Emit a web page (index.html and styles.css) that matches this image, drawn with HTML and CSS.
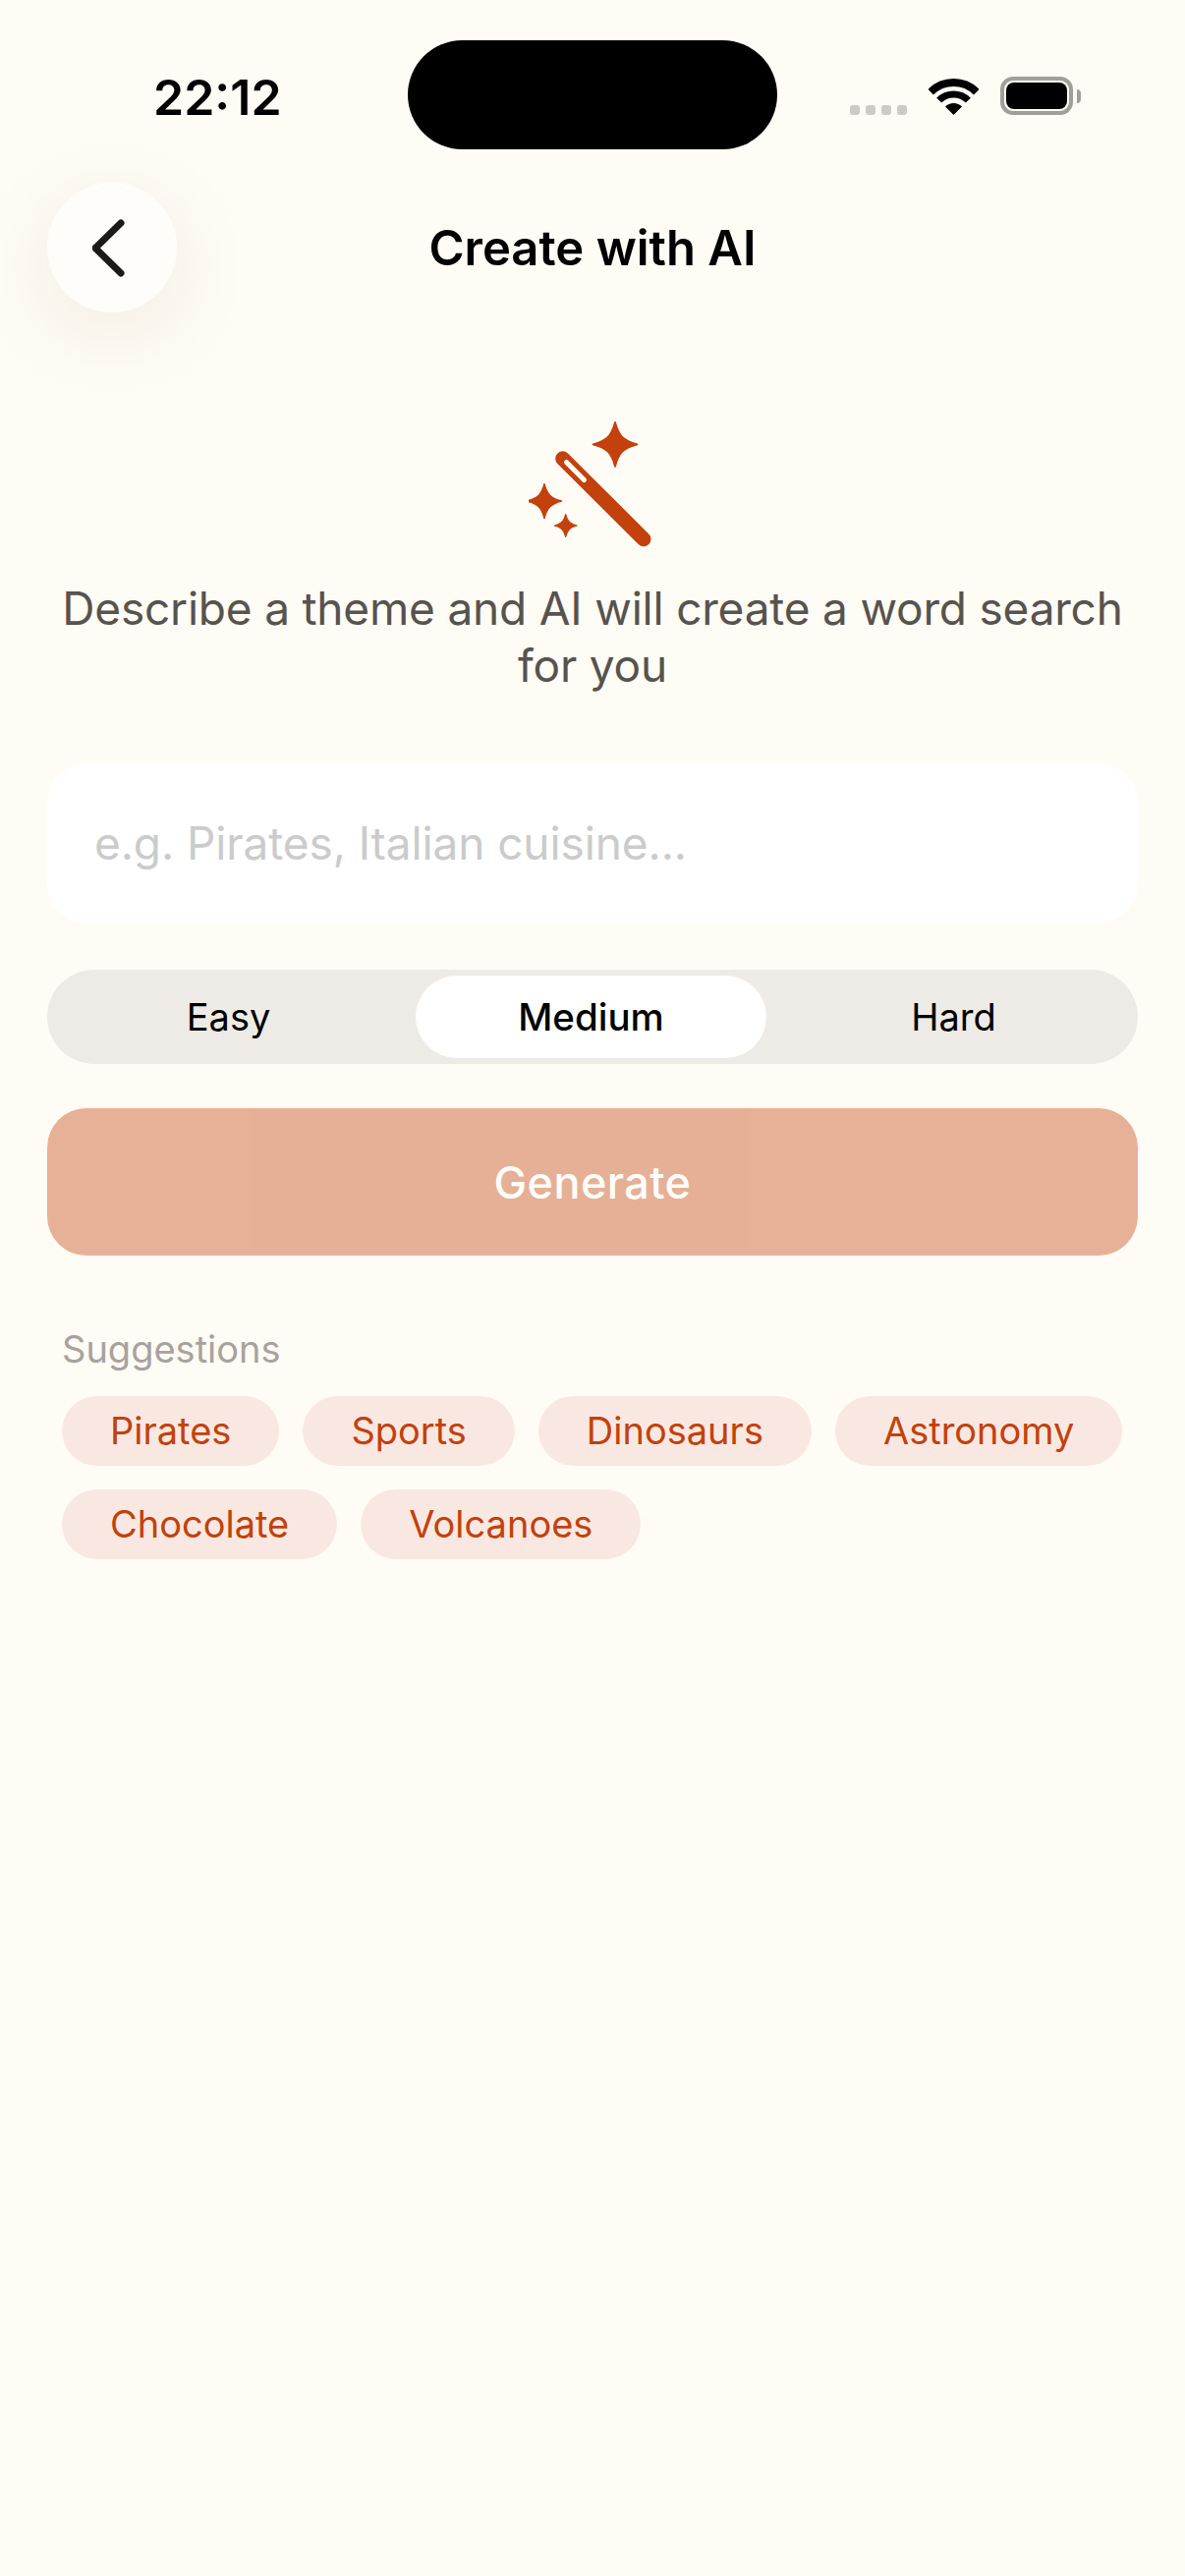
FILE: index.html
```html
<!DOCTYPE html>
<html lang="en">
<head>
  <meta charset="UTF-8" />
  <meta name="viewport" content="width=device-width, initial-scale=1.0" />
  <title>Create with AI</title>
  <link rel="stylesheet" href="styles.css">
</head>
<body>
  <!-- Status bar -->
  <div class="status-bar">
    <div class="time">22:12</div>
    <div class="island"></div>
    <div class="status-icons">
      <div class="signal"><span></span><span></span><span></span><span></span></div>
      <svg class="wifi" width="51" height="37" viewBox="0 0 51 37">
        <path d="M2.2 13.7A33 33 0 0 1 48.8 13.7" fill="none" stroke="#000" stroke-width="8" />
        <path d="M10.65 22.15A21 21 0 0 1 40.35 22.15" fill="none" stroke="#000" stroke-width="7" />
        <path d="M25.5 37L17 28.5A12 12 0 0 1 34 28.5Z" fill="#000" />
      </svg>
      <div class="battery"><div class="battery-level"></div></div>
      <div class="battery-tip"></div>
    </div>
  </div>

  <!-- Header -->
  <div class="header">
    <button class="back-button">
      <svg width="40" height="64" viewBox="0 0 40 64">
        <path d="M29 7L3 32.5L29 58" fill="none" stroke="#1c1917" stroke-width="7" stroke-linecap="round" stroke-linejoin="round" />
      </svg>
    </button>
    <h1>Create with AI</h1>
  </div>

  <div class="content">
    <svg class="wand" width="130" height="140" viewBox="0 0 130 140">
      <defs>
        <path id="star" d="M0 -10C1.6 -3.8 3.8 -1.6 10 0C3.8 1.6 1.6 3.8 0 10C-1.6 3.8 -3.8 1.6 -10 0C-3.8 -1.6 -1.6 -3.8 0 -10Z" />
      </defs>
      <g fill="#c2410c" stroke="#c2410c" stroke-linejoin="round">
        <use href="#star" transform="translate(88 32.3) scale(2.25)" stroke-width="0.8" />
        <use href="#star" transform="translate(16 90) scale(1.75)" stroke-width="0.8" />
        <use href="#star" transform="translate(37.7 115) scale(1.15)" stroke-width="0.9" />
      </g>
      <path d="M34.7 46.7L117 128.7" stroke="#c2410c" stroke-width="15" stroke-linecap="round" />
      <path d="M38.5 50.5L56.5 68.5" stroke="#fffcf5" stroke-width="5" stroke-linecap="round" />
    </svg>

    <p class="intro">Describe a theme and AI will create a word search for you</p>

    <input class="theme-input" type="text" placeholder="e.g. Pirates, Italian cuisine..." />

    <div class="difficulty">
      <div class="level">Easy</div>
      <div class="level selected">Medium</div>
      <div class="level">Hard</div>
    </div>

    <button class="generate" disabled>Generate</button>

    <div class="suggestions">
      <div class="suggestions-label">Suggestions</div>
      <div class="chips">
        <div class="chip">Pirates</div>
        <div class="chip">Sports</div>
        <div class="chip">Dinosaurs</div>
        <div class="chip">Astronomy</div>
        <div class="chip">Chocolate</div>
        <div class="chip">Volcanoes</div>
      </div>
    </div>
  </div>
</body>
</html>
```

FILE: styles.css
```css
* {
  box-sizing: border-box;
}

body {
  margin: 0;
  min-height: 2622px;
  background-color: #fffcf5;
  color: #000;
  font-family: Inter, "Liberation Sans", sans-serif;
}

/* Status bar */
.status-bar {
  display: flex;
  align-items: flex-start;
  height: 186px;
  padding-top: 41px;
}
.time {
  width: 415px;
  padding: 30px 0 0 156px;
  font-size: 50px;
  font-weight: 600;
  line-height: 56px;
}
.island {
  width: 376px;
  height: 111px;
  background-color: #000;
  border-radius: 56px;
}
.status-icons {
  display: flex;
  align-items: flex-end;
  height: 76px;
  padding-left: 74px;
}
.signal {
  display: flex;
  gap: 6px;
}
.signal span {
  width: 10px;
  height: 10px;
  background-color: #cdcbc6;
  border-radius: 3px;
}
.wifi {
  margin-left: 22px;
}
.battery {
  width: 74px;
  height: 39px;
  margin-left: 22px;
  padding: 2px;
  border: 4px solid #a09f9a;
  border-radius: 13px;
}
.battery-level {
  height: 100%;
  background-color: #000;
  border-radius: 8px;
}
.battery-tip {
  width: 4px;
  height: 14px;
  margin: 0 0 12px 4px;
  background-color: #a09f9a;
  border-radius: 0 7px 7px 0;
}

/* Header */
.header {
  display: grid;
  grid-template-columns: 1fr auto 1fr;
  align-items: center;
  padding: 0 48px;
}
.back-button {
  display: flex;
  align-items: center;
  justify-content: center;
  width: 132px;
  height: 132px;
  padding: 0;
  border: none;
  border-radius: 50%;
  background-color: #fffdf9;
  box-shadow: 0 20px 90px rgba(60, 40, 20, 0.08);
}
h1 {
  margin: 2px 0 0;
  font-size: 49px;
  font-weight: 600;
  line-height: 64px;
}

/* Main content */
.content {
  display: flex;
  flex-direction: column;
  padding: 102px 48px 0;
}
.wand {
  align-self: center;
}
.intro {
  margin: 30px 0 0;
  color: #57534e;
  font-size: 46px;
  letter-spacing: -0.2px;
  line-height: 58px;
  text-align: center;
}
.theme-input {
  height: 162px;
  margin-top: 71px;
  padding: 0 48px;
  border: none;
  border-radius: 40px;
  background-color: #fff;
  font-family: inherit;
  font-size: 46px;
  letter-spacing: -0.1px;
}
.theme-input::placeholder {
  color: #cbcbcb;
  opacity: 1;
}
.difficulty {
  display: grid;
  grid-template-columns: repeat(3, 1fr);
  gap: 12px;
  height: 96px;
  margin-top: 48px;
  padding: 6px 9px 6px 6px;
  border-radius: 48px;
  background-color: #eeebe6;
}
.level {
  display: flex;
  align-items: center;
  justify-content: center;
  border-radius: 42px;
  font-size: 38px;
}
.level.selected {
  background-color: #fff;
  font-size: 38.5px;
  font-weight: 500;
}
.generate {
  height: 150px;
  margin-top: 45px;
  border: none;
  border-radius: 40px;
  background-color: #c2410c;
  color: #fff;
  font-family: inherit;
  font-size: 45px;
  font-weight: 500;
  letter-spacing: 0.4px;
  opacity: 0.4;
}

/* Suggestions */
.suggestions {
  margin-top: 71px;
  padding-left: 15px;
}
.suggestions-label {
  color: #a8a29e;
  font-size: 38px;
  line-height: 48px;
}
.chips {
  display: flex;
  flex-wrap: wrap;
  gap: 24px;
  margin-top: 24px;
}
.chip {
  height: 71px;
  padding: 0 49px;
  border-radius: 36px;
  background-color: #f9e8e1;
  color: #c2410c;
  font-size: 38px;
  line-height: 71px;
}
```
